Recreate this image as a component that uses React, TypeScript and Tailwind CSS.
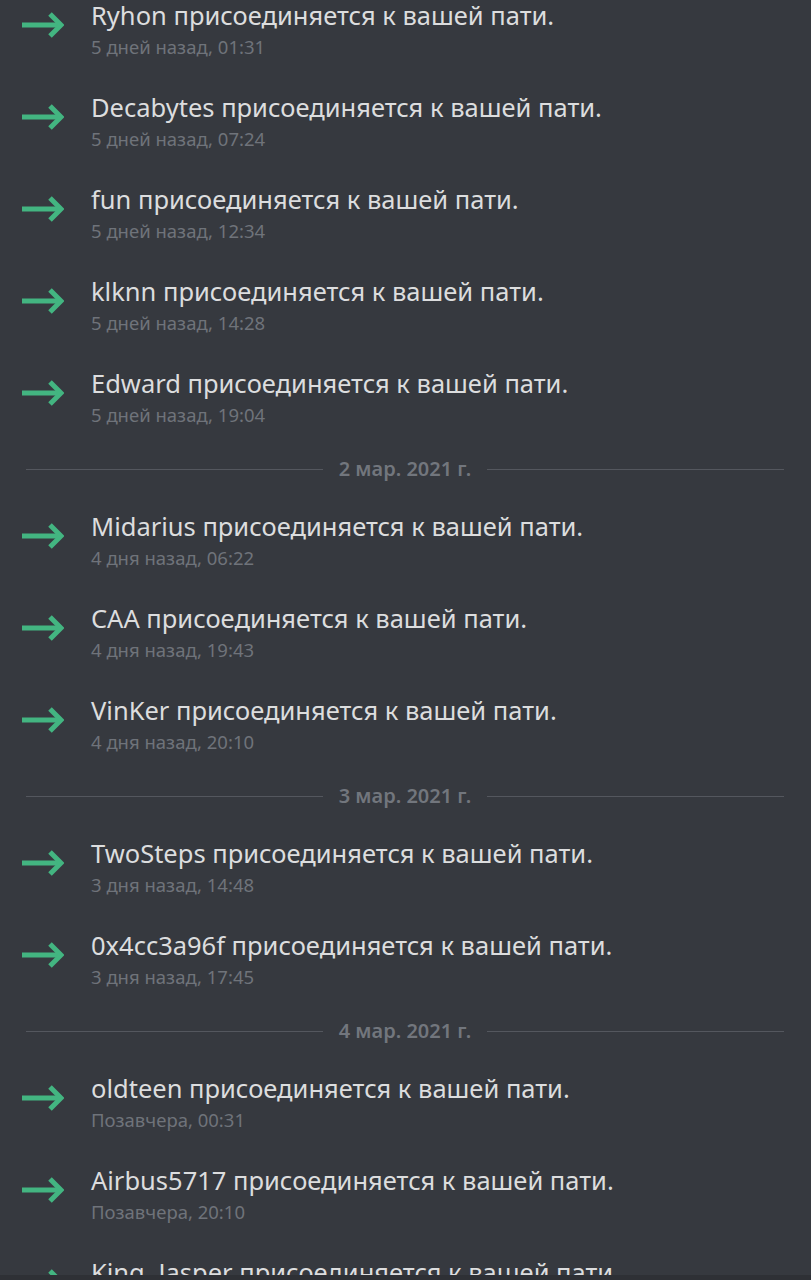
const items: ({ kind: "row"; name: string; time: string } | { kind: "date"; label: string })[] = [
  { kind: "row", name: "Ryhon", time: "5 дней назад, 01:31" },
  { kind: "row", name: "Decabytes", time: "5 дней назад, 07:24" },
  { kind: "row", name: "fun", time: "5 дней назад, 12:34" },
  { kind: "row", name: "klknn", time: "5 дней назад, 14:28" },
  { kind: "row", name: "Edward", time: "5 дней назад, 19:04" },
  { kind: "date", label: "2 мар. 2021 г." },
  { kind: "row", name: "Midarius", time: "4 дня назад, 06:22" },
  { kind: "row", name: "CAA", time: "4 дня назад, 19:43" },
  { kind: "row", name: "VinKer", time: "4 дня назад, 20:10" },
  { kind: "date", label: "3 мар. 2021 г." },
  { kind: "row", name: "TwoSteps", time: "3 дня назад, 14:48" },
  { kind: "row", name: "0x4cc3a96f", time: "3 дня назад, 17:45" },
  { kind: "date", label: "4 мар. 2021 г." },
  { kind: "row", name: "oldteen", time: "Позавчера, 00:31" },
  { kind: "row", name: "Airbus5717", time: "Позавчера, 20:10" },
  { kind: "row", name: "King_Jasper", time: "Позавчера, 21:02" },
];

function JoinArrow() {
  return (
    <svg width="44" height="28" viewBox="0 0 44 28" fill="none">
      <path d="M2 14H40" stroke="#43b581" strokeWidth="5" />
      <path d="M30 3L41 14L30 25" stroke="#43b581" strokeWidth="5" />
    </svg>
  );
}

function JoinRow({ name, time }: { name: string; time: string }) {
  return (
    <div className="flex h-[92px] shrink-0">
      <div className="w-[91px] shrink-0 pl-[20px] pt-[12px]">
        <JoinArrow />
      </div>
      <div className="min-w-0">
        <div className="text-[25.5px] leading-8 text-[#dcddde] whitespace-nowrap">
          {name} присоединяется к вашей пати.
        </div>
        <div className="text-[18.5px] leading-8 text-[#6f737a] whitespace-nowrap">{time}</div>
      </div>
    </div>
  );
}

function DateDivider({ label }: { label: string }) {
  return (
    <div className="h-[51px] shrink-0">
      <div className="flex h-[20px] items-center pl-[26px] pr-[27px]">
        <div className="h-px flex-1 bg-[#54575e]" />
        <span className="px-[16px] text-[20px] font-semibold text-[#72767d]">{label}</span>
        <div className="h-px flex-1 bg-[#54575e]" />
      </div>
    </div>
  );
}

export default function App() {
  return (
    <div
      className="flex h-[1280px] flex-col overflow-hidden bg-[#36393f]"
      style={{ fontFamily: '"Noto Sans", "Open Sans", sans-serif' }}
    >
      <div className="-mt-px flex min-h-0 flex-1 flex-col overflow-hidden">
        {items.map((it, i) =>
          it.kind === "row" ? (
            <JoinRow key={i} name={it.name} time={it.time} />
          ) : (
            <DateDivider key={i} label={it.label} />
          )
        )}
      </div>
      <div className="h-[5px] shrink-0 bg-[#2e3035]" />
    </div>
  );
}
